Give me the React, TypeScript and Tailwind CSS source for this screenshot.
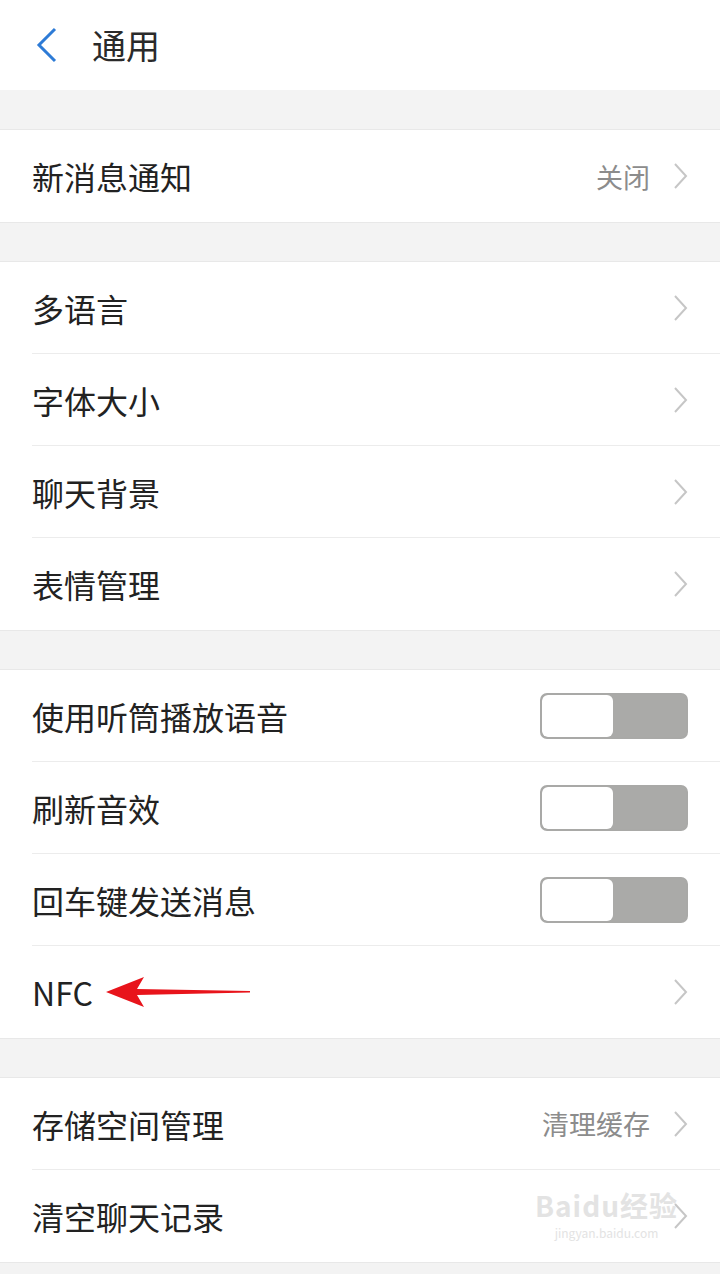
import { Fragment } from 'react';

type Row = {
  label: string;
  value?: string;
  toggle?: boolean;
  arrow?: boolean;
};

const sections: Row[][] = [
  [{ label: '新消息通知', value: '关闭' }],
  [{ label: '多语言' }, { label: '字体大小' }, { label: '聊天背景' }, { label: '表情管理' }],
  [
    { label: '使用听筒播放语音', toggle: true },
    { label: '刷新音效', toggle: true },
    { label: '回车键发送消息', toggle: true },
    { label: 'NFC', arrow: true },
  ],
  [{ label: '存储空间管理', value: '清理缓存' }, { label: '清空聊天记录' }],
];

function Chevron() {
  return (
    <svg width="16" height="28" viewBox="0 0 16 28" className="shrink-0">
      <polyline points="3,2 14,14 3,26" fill="none" stroke="#c6c6c6" strokeWidth="2" />
    </svg>
  );
}

function Toggle() {
  return (
    <div className="flex h-[46px] w-[148px] overflow-hidden rounded-[7px] border-2 border-[#a9a9a7] bg-[#aaaaa8]">
      <div className="h-full w-[71px] rounded-[6px] bg-white" />
    </div>
  );
}

function RedArrow() {
  return (
    <svg width="150" height="34" viewBox="0 0 150 34" className="absolute left-[104px] top-[29px]">
      <path d="M2 17 L40 2 L33 14 L146 16 L146 17.5 L33 20 L40 32 Z" fill="#e8141b" />
    </svg>
  );
}

export default function App() {
  return (
    <div
      className="min-h-[1274px] w-[720px] bg-[#f3f3f3] text-[#222]"
      style={{ fontFamily: '"Noto Sans CJK SC", "Noto Sans", sans-serif' }}
    >
      <div className="flex h-[90px] items-center bg-white">
        <svg width="24" height="36" viewBox="0 0 24 36" className="ml-[35px]">
          <polyline points="20,2 4,18 20,34" fill="none" stroke="#2d7bd6" strokeWidth="3" />
        </svg>
        <span className="ml-[33px] text-[34px] leading-none text-[#2a2a2a]">通用</span>
      </div>

      {sections.map((rows, si) => (
        <div key={si} className="mt-[40px] bg-white ring-1 ring-[#e8e8e8]">
          {rows.map((row, ri) => (
            <Fragment key={row.label}>
              <div className="relative pl-[32px]">
                <div
                  className={`flex h-[92px] items-center pr-[32px] ${
                    ri < rows.length - 1 ? 'border-b border-[#ececec]' : ''
                  }`}
                >
                  <span className="flex-1 text-[32px] leading-none">{row.label}</span>
                  {row.value && <span className="mr-[22px] text-[27px] leading-none text-[#8c8c8c]">{row.value}</span>}
                  {row.toggle ? <Toggle /> : <Chevron />}
                </div>
                {row.arrow && <RedArrow />}
                {si === 3 && ri === 1 && (
                  <div className="pointer-events-none absolute right-[42px] top-[18px] flex flex-col items-center gap-[4px] text-[#e3e3e3]">
                    <span className="text-[28px] font-bold leading-[34px] tracking-[1px]">Baidu经验</span>
                    <span className="text-[12px] leading-[14px]">jingyan.baidu.com</span>
                  </div>
                )}
              </div>
            </Fragment>
          ))}
        </div>
      ))}
    </div>
  );
}
